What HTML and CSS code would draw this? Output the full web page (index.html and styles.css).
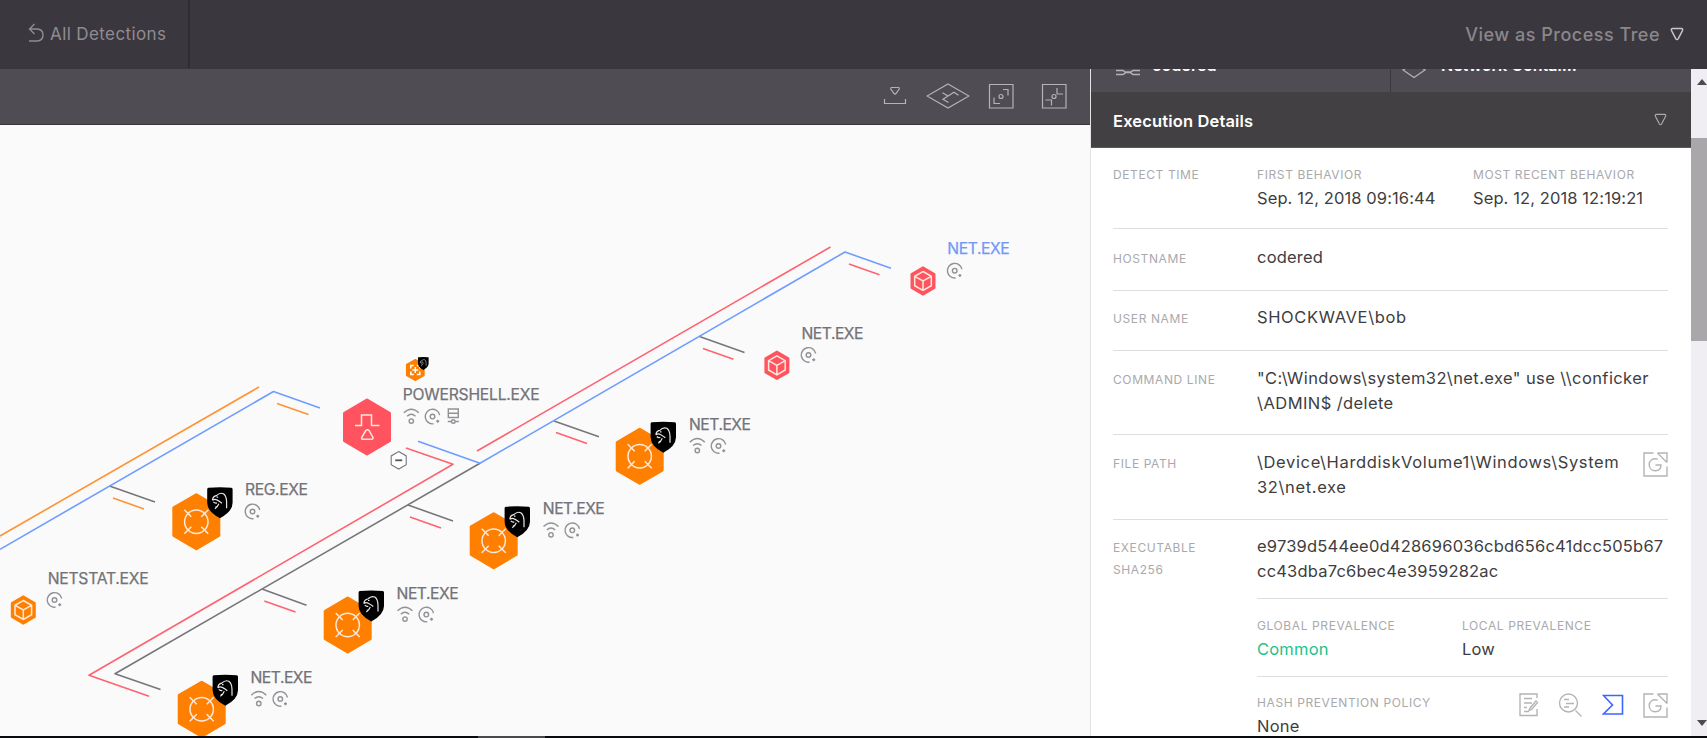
FILE: index.html
```html
<!DOCTYPE html>
<html lang="en">
<head>
<meta charset="utf-8">
<title>Process Tree</title>
<link rel="stylesheet" href="styles.css">
</head>
<body>
<svg class="defs" width="0" height="0">
  <defs>
    <symbol id="tri" viewBox="0 0 14 14"><path d="M2.6 1.5h8.8q1.7.3 1.1 2L8.300 11.600Q7 13.600 5.700 11.600L1.500 3.500Q.9 1.800 2.600 1.500Z"/></symbol>
    <symbol id="google" viewBox="0 0 25 25"><path d="M10.500 1H1v23h23v-9.500M14.500 1H24v9.500M14.500 1L24 10.500M14.800 7.200C10 5.500 6.200 8.500 6.200 12.500c0 3.800 2.700 6.200 6 6.200 3.600 0 5.800-2.400 5.800-5.700h-5.500"/></symbol>
    <g id="big-hex"><path stroke-linejoin="round" stroke-width="3" stroke="currentColor" fill="currentColor" d="M0-27L22.500-13.800V13.800L0 27L-22.500 13.800V-13.800Z"/></g>
    <g id="target" class="glyph"><circle r="11.700"/><path d="M-12-12l7 7M12-12l-7 7M-12 12l7-7M12 12l-7-7"/></g>
    <g id="shield"><path d="M-11.500-15Q0-16 11.500-15Q12.700-15 12.700-13.500V0Q12.500 9 0 15.500Q-12.500 9-12.700 0V-13.500Q-12.700-15-11.500-15Z"/><path class="falcon" d="M-7.500-2.500Q-7-6.500-3.500-7Q0-10.500 3.500-9Q6.500-7 6.700-1V5.500M-7.500-2.500Q-5-4-3-2.800Q0-1.200 2 .5M-6.500-.8Q-5 .8-3 .2M-3.300-5.500h1.500M-1 1Q-2.500 4.500-5 6M-3 4.500l-1.500-.5"/></g>
    <g id="threat"><use href="#big-hex"/><use href="#target"/><use href="#shield" x="23.600" y="-19"/></g>
    <g id="cube"><path stroke-linejoin="round" stroke-width="2" stroke="currentColor" fill="currentColor" d="M0-13.700L11.500-7V7L0 13.700L-11.500 7V-7Z"/><path class="glyph" d="M0-9.500L8.300-4.700V4.700L0 9.500L-8.300 4.700V-4.700ZM-8.300-4.700L0 0L8.300-4.700M0 0V9.500"/></g>
    <g id="disc" class="mini"><path d="M7.200-1.500A7.300 7.300 0 1 0 1 7.200"/><circle r="2.300"/><path d="M3.700 4.700h3M5.200 3.200v3"/></g>
    <g id="wifi" class="mini"><path d="M-7.500-3.800Q0-11 7.500-3.800M-4.200-.4Q0-4.300 4.200-.4"/><circle cy="4.500" r="2.200"/></g>
  </defs>
</svg>
<div class="app">
  <header class="topbar">
    <a class="back">
      <svg class="back-icon" width="17" height="20" viewBox="0 0 17 20"><path d="M6.500 1L1.500 6l5 5M1.500 6H9q6 .3 6 6t-6 6H1"/></svg>
      <span class="back-text">All Detections</span>
    </a>
    <div class="view"><span class="view-text">View as Process Tree</span><svg class="view-icon" width="14" height="14"><use href="#tri"/></svg></div>
  </header>
  <main class="body">
    <section class="graph">
      <div class="toolbar">
        <svg width="24" height="26" viewBox="0 0 24 26"><path d="M1.500 16v4.500h21V16M8.600 4.500h6.800q1.200.3.8 1.500l-3.200 4.500q-1 1-2 0L7.800 6q-.4-1.200.8-1.500Z"/></svg>
        <svg width="44" height="26" viewBox="0 0 44 26"><path d="M22 1L43 13L22 25L1 13ZM16.500 9.800L22 13L28 9.300L32.500 12.300M22 13L17 16.300L22.500 19.500"/></svg>
        <svg width="26" height="26" viewBox="0 0 26 26"><path d="M1.500 1.500h23.500v23.500H1.500ZM15 6.500h5v6M6 14.500v6h6"/><circle cx="13" cy="13.500" r="2"/></svg>
        <svg width="26" height="26" viewBox="0 0 26 26"><path d="M1.500 1.500h23.500v23.500H1.500ZM16 5v6h6M4.500 17h6v5.500"/><circle cx="13" cy="13.500" r="2"/></svg>
      </div>
      <svg class="canvas" width="1090" height="611" viewBox="0 125 1090 611">
        <g class="edges">
          <path class="orange" d="M0 536L259 387M277 403.500L308.500 414.500M113 498L144 509"/>
          <path class="gray" d="M109.500 486L155 502M480 463.300L115 673.700L160.500 689.500M262 589L306.500 605.200M408 505L453 521M554 421L599 436.700M699.500 336.500L744.500 352.400"/>
          <path class="blue" d="M0 549.300L273.500 391.500L320 408M418 441.300L480 463.300L845 252L891 268.200"/>
          <path class="red" d="M406 448L453 464.300L89 675.300L149 696.300M477 451L830.500 247M849 264L879.500 274.700M703 348.500L733.500 359.300M556 432.500L587 443.500M410 517L441 528M264.300 601L295.500 612"/>
        </g>
        <g class="c-orange">
          <use href="#threat" x="639.700" y="456.300"/><use href="#threat" x="493.700" y="540.700"/><use href="#threat" x="347.700" y="625"/><use href="#threat" x="201.700" y="709.200"/><use href="#threat" x="196.300" y="521.700"/>
          <use href="#cube" x="23.300" y="610"/>
          <g transform="translate(415.300 370)"><use href="#big-hex" transform="scale(.39)"/><path class="plus" d="M-4.500-1.500V-4.500H-1.500M1.500-4.500H4.500V-1.500M4.500 1.500V4.500H1.500M-1.500 4.500H-4.500V1.500M-3 0H3M0-3V3"/></g>
          <use href="#shield" transform="translate(423.300 363.500) scale(.42)"/>
        </g>
        <g class="c-red">
          <use href="#cube" x="776.900" y="365.300"/><use href="#cube" x="923" y="281"/>
          <g transform="translate(367 427)"><use href="#big-hex"/><path class="glyph" d="M-12-1.500H-5.500V-12H4.500V-1.500H12.500M-1.200 3.500Q.5 2 2 3.500L6 10.500Q6.300 12 5 12.300H-4.500Q-5.800 12-5.300 10.500Z"/></g>
        </g>
        <g transform="translate(398.700 460.300)" class="collapse"><path d="M0-8.700L7.500-4.400V4.400L0 8.700L-7.500 4.400V-4.400Z"/><path class="dash" d="M-3.500 0H3.500"/></g>
        <g class="names">
          <text x="689" y="430" textLength="62">NET.EXE</text><text x="542.800" y="514.300" textLength="62">NET.EXE</text><text x="396.600" y="598.500" textLength="62">NET.EXE</text><text x="250.500" y="683" textLength="62">NET.EXE</text>
          <text x="245" y="495.300" textLength="63">REG.EXE</text><text x="47.700" y="583.700" textLength="101">NETSTAT.EXE</text><text x="402.700" y="400.300" textLength="137">POWERSHELL.EXE</text>
          <text x="801.500" y="338.700" textLength="62">NET.EXE</text><text class="active" x="947.300" y="254.300" textLength="62.500">NET.EXE</text>
        </g>
        <use href="#wifi" x="697.300" y="446"/><use href="#disc" x="718.500" y="446"/>
        <use href="#wifi" x="551" y="530.300"/><use href="#disc" x="572.300" y="530.300"/>
        <use href="#wifi" x="405" y="614.600"/><use href="#disc" x="426.300" y="614.600"/>
        <use href="#wifi" x="258.800" y="699"/><use href="#disc" x="280.300" y="699"/>
        <use href="#disc" x="252.500" y="511.500"/><use href="#disc" x="54.500" y="600"/>
        <use href="#disc" x="808.500" y="355"/><use href="#disc" x="954.700" y="270.700"/>
        <use href="#wifi" x="411.300" y="416.600"/><use href="#disc" x="432.500" y="416.600"/>
        <g class="mini" transform="translate(453.300 416)"><path d="M-5-7H5V1.500H-5ZM-5-2.700H5M-5.500 5.500H-2M2 5.500H5.500"/><circle cy="5.500" r="1.800"/></g>
      </svg>
    </section>
    <aside class="panel">
      <div class="summary">
        <div class="cell"><svg class="host-icon" width="24" height="16" viewBox="0 0 24 16"><path d="M0 10.500h7l2 1.500h6l2-1.500h7M0 14.500h7l3-2h4l3 2h7"/></svg><span class="host">codered</span></div>
        <div class="cell second"><svg class="contain-icon" width="24" height="18" viewBox="0 0 24 18"><path d="M1 9L12 2l11 7-11 7.500Z"/></svg><span class="contain">Network Contai...</span></div>
      </div>
      <div class="section-head"><span>Execution Details</span><svg width="13" height="13"><use href="#tri"/></svg></div>
      <div class="details">
        <div class="row r-time"><div class="label">DETECT TIME</div><div><div class="label">FIRST BEHAVIOR</div><div class="value time">Sep. 12, 2018 09:16:44</div></div><div class="recent"><div class="label">MOST RECENT BEHAVIOR</div><div class="value time">Sep. 12, 2018 12:19:21</div></div></div>
        <div class="row r-host"><div class="label">HOSTNAME</div><div class="value">codered</div></div>
        <div class="row r-user"><div class="label">USER NAME</div><div class="value user">SHOCKWAVE\bob</div></div>
        <div class="row r-cmd"><div class="label">COMMAND LINE</div><div class="value cmd">"C:\Windows\system32\net.exe" use \\conficker<br>\ADMIN$ /delete</div></div>
        <div class="row r-file"><div class="label">FILE PATH</div><div class="value path">\Device\HarddiskVolume1\Windows\System<br>32\net.exe</div><svg class="gray-icon" width="25" height="25"><use href="#google"/></svg></div>
        <div class="row r-exec"><div class="label">EXECUTABLE<br>SHA256</div>
          <div class="stack">
            <div class="value hash">e9739d544ee0d428696036cbd656c41dcc505b67<br>cc43dba7c6bec4e3959282ac</div>
            <div class="prevalence"><div><div class="label">GLOBAL PREVALENCE</div><div class="value common">Common</div></div><div><div class="label">LOCAL PREVALENCE</div><div class="value">Low</div></div></div>
            <div class="policy"><div><div class="label">HASH PREVENTION POLICY</div><div class="value">None</div></div>
              <div class="actions">
                <svg class="gray-icon" width="20" height="24" viewBox="0 0 20 24"><path d="M18 5V1H1v21.500h17V16M5 5.500h8M5 10h8M5 14.500h3M5 18.500h5M11 15l6-7 1.500 1.500-6 7-2.500 1Z"/></svg>
                <svg class="gray-icon" width="25" height="25" viewBox="0 0 25 25"><circle cx="10.500" cy="10" r="9"/><path d="M17.500 17.500l6 6M6 6.500h5M8 10.500h8M6 14h5"/></svg>
                <svg class="blue-icon" width="22" height="22" viewBox="0 0 22 22"><path d="M1.500 1.500h19v18.500H1.500L10.500 11Z"/></svg>
                <svg class="gray-icon" width="25" height="25"><use href="#google"/></svg>
              </div>
            </div>
          </div>
        </div>
      </div>
    </aside>
    <div class="scrollbar"><div class="arrow up"></div><div class="thumb"></div><div class="arrow down"></div></div>
  </main>
  <footer class="edge"><div class="edge-thumb"></div></footer>
</div>
</body>
</html>
```
FILE: styles.css
```css
* { box-sizing: border-box; }
body { margin: 0; font-family: Inter, "Liberation Sans", sans-serif; background: #fff; overflow: hidden; }
svg { display: block; flex: none; fill: none; }
.defs { position: absolute; }
.app { width: 1707px; height: 738px; display: flex; flex-direction: column; overflow: hidden; }

.topbar { height: 69px; flex: none; background: #3b373e; display: flex; justify-content: space-between; color: #8f8c91; }
.back { width: 190px; height: 68px; border-right: 2px solid #302c33; display: flex; align-items: center; padding-left: 28px; gap: 5px; }
.back-icon { stroke: #8f8c91; stroke-width: 1.4; margin-top: -2px; }
.back-text { font-size: 17px; letter-spacing: .4px; white-space: nowrap; }
.view { display: flex; align-items: center; padding-right: 23px; gap: 10px; }
.view-text { font-size: 18px; font-weight: 500; letter-spacing: .5px; color: #8a878c; }
.view-icon { stroke: #c9c7ca; stroke-width: 1.5; margin-top: -2px; }

.body { height: 667px; flex: none; display: flex; }
.graph { width: 1090px; display: flex; flex-direction: column; background: #fafafb; }
.toolbar { height: 56px; flex: none; background: #504c53; border-bottom: 1px solid #38343a; display: flex; justify-content: flex-end; align-items: center; padding: 0 23px 1px 0; stroke: #b5b3b6; stroke-width: 1.2; }
.toolbar svg:nth-child(2) { margin-left: 19px; }
.toolbar svg:nth-child(3) { margin-left: 18px; }
.toolbar svg:nth-child(4) { margin-left: 27px; }

.edges { stroke-width: 1.6; stroke-linejoin: round; }
.orange { stroke: #ff9332; }
.gray { stroke: #77777b; }
.blue { stroke: #6f9cff; }
.red { stroke: #ff6370; }
.c-orange { color: #ff8000; }
.c-red { color: #ff545f; }
.glyph { fill: none; stroke: #ffe9dc; stroke-width: 1.5; }
#shield { fill: #000; }
.falcon { fill: none; stroke: #e8e8e8; stroke-width: 1.2; }
.plus { stroke: #fff; stroke-width: 1.5; }
.mini { fill: none; stroke: #929296; stroke-width: 1.4; }
.collapse { stroke: #77777b; stroke-width: 1.1; fill: #fff; }
.dash { stroke: #555; stroke-width: 1.8; }
.names { fill: #737277; stroke: #737277; stroke-width: .25; font-size: 15.7px; }
.names .active { fill: #7399f5; stroke: #7399f5; }

.panel { width: 601px; border-left: 1px solid #e4e3e5; background: #fff; overflow: hidden; }
.summary { height: 23px; background: #504c53; display: flex; color: #fff; font-size: 16px; font-weight: 600; line-height: 20px; overflow: hidden; }
.cell { width: 299px; display: flex; align-items: flex-start; padding-left: 25px; }
.cell span { margin-top: -14px; }
.second { width: 301px; border-left: 1px solid #3c393e; padding-left: 11px; }
.host-icon { stroke: #b5b3b6; stroke-width: 1.4; margin-top: -9px; }
.host { margin-left: 12px; letter-spacing: .1px; }
.contain-icon { stroke: #b5b3b6; stroke-width: 1.3; margin-top: -8px; }
.contain { margin-left: 15px; }
.section-head { height: 56px; background: #424042; border-bottom: 1px solid #5a585a; display: flex; align-items: center; justify-content: space-between; padding: 3px 24px 0 22px; color: #fff; font-size: 16.5px; font-weight: 600; letter-spacing: .15px; }
.section-head svg { stroke: #aaa; stroke-width: 1.3; margin-top: -3px; }

.details { padding: 0 23px 0 22px; }
.label { font-size: 12px; line-height: 22px; color: #aaa9ab; letter-spacing: .6px; white-space: nowrap; }
.value { font-size: 16.5px; line-height: 25px; color: #3e3d40; letter-spacing: .2px; white-space: nowrap; }
.time { letter-spacing: .1px; }
.user, .path { letter-spacing: .63px; }
.cmd { letter-spacing: .4px; }
.row { display: grid; grid-template-columns: 144px 216px 195px; border-bottom: 1px solid #dedee0; }
.row > .label { padding-top: 3px; }
.r-time { height: 81px; padding-top: 16px; }
.r-time > .label { padding-top: 0; }
.r-host { height: 62px; padding-top: 16px; }
.r-user { height: 60px; padding-top: 14px; }
.r-cmd { height: 84px; padding-top: 15px; }
.r-file { height: 85px; padding-top: 15px; grid-template-columns: 144px 386px 25px; }
.r-file svg { margin-top: 2px; }
.r-exec { padding-top: 14px; grid-template-columns: 144px 411px; border: 0; }
.prevalence { margin-top: 14px; height: 79px; border-top: 1px solid #dedee0; border-bottom: 1px solid #dedee0; padding-top: 16px; display: grid; grid-template-columns: 205px 206px; }
.policy { padding-top: 15px; display: flex; justify-content: space-between; }
.common { color: #1ec28b; }
.actions { display: flex; gap: 19px; padding-top: 1px; }
.gray-icon { stroke: #b4b3b6; stroke-width: 1.4; }
.blue-icon { stroke: #3b66ff; stroke-width: 1.6; margin-top: 1px; }

.scrollbar { width: 16px; background: #f0eef2; display: flex; flex-direction: column; align-items: flex-end; overflow: hidden; }
.arrow { width: 10px; height: 6px; background: #4d4b4e; flex: none; }
.up { margin-top: 10px; clip-path: polygon(50% 0, 100% 100%, 0 100%); }
.thumb { width: 16px; height: 203px; margin-top: 53px; background: #a9a7aa; flex: none; }
.down { margin-top: 379px; clip-path: polygon(0 0, 100% 0, 50% 100%); }
.edge { height: 2px; background: #090a0e; padding-left: 478px; }
.edge-thumb { width: 67px; height: 2px; background: #49484b; }
```
